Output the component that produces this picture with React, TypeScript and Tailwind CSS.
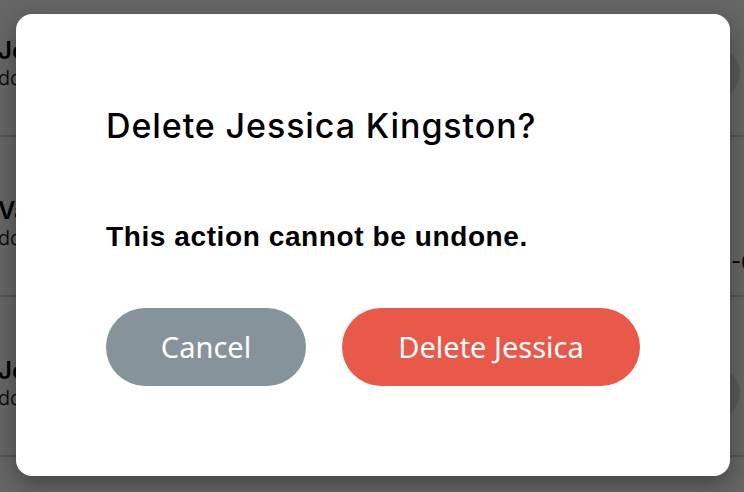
import React from 'react';

interface Person {
  id: number;
  name: string;
  detail: string;
  side: 'avatar' | 'date';
}

const people: Person[] = [
  { id: 1, name: 'Jessica Kingston', detail: 'dob 1988-04-12', side: 'avatar' },
  { id: 2, name: 'Valerie Ortiz', detail: 'dob 1991-09-30', side: 'date' },
  { id: 3, name: 'John Marsh', detail: 'dob 1979-01-07', side: 'avatar' },
  { id: 4, name: 'Karen Doyle', detail: 'dob 1985-06-21', side: 'date' },
];

const DeleteDialog: React.FC = () => {
  return (
    <div className="relative w-[744px] h-[492px] overflow-hidden bg-white">
      {/* list behind the dialog */}
      <ul className="-mt-[23px] -ml-[2px]">
        {people.map(person => (
          <li key={person.id} className="h-[160px] border-b-2 border-[#d4d4d4] flex justify-between">
            <div className="pt-[60px] font-['Inter',sans-serif] text-black whitespace-nowrap">
              <div className="text-[24px] leading-[28px] font-semibold">{person.name}</div>
              <div className="text-[20px] leading-[24px] font-light mt-[1px]">{person.detail}</div>
            </div>
            {person.side === 'avatar' ? (
              <div className="mt-[70px] mr-[4px] w-[52px] h-[52px] rounded-full bg-[#e0e0e0]" />
            ) : (
              <div className="w-[13px] mt-[112px] text-[22px] leading-[26px] whitespace-nowrap font-['Inter',sans-serif] text-black">
                -04-12
              </div>
            )}
          </li>
        ))}
      </ul>

      <div className="absolute inset-0 bg-black/60">
        <div className="mt-[14px] ml-[16px] w-[714px] h-[462px] rounded-[16px] bg-white shadow-[0_8px_24px_rgba(0,0,0,0.35)] pl-[90px] pt-[88px]">
          <h2 className="font-['Inter',sans-serif] font-medium text-[34px] leading-[48px] text-black tracking-[0.9px]">
            Delete Jessica Kingston?
          </h2>
          <p className="mt-[70px] font-['Liberation_Sans',Arial,sans-serif] font-bold text-[28px] leading-[34px] text-black tracking-[0.6px]">
            This action cannot be undone.
          </p>
          <div className="mt-[54px] flex gap-[36px]">
            <button className="w-[200px] h-[78px] rounded-full bg-[#87939a] text-white font-['Noto_Sans',sans-serif] text-[29px]">
              Cancel
            </button>
            <button className="w-[298px] h-[78px] rounded-full bg-[#e8594a] text-white font-['Noto_Sans',sans-serif] text-[29px]">
              Delete Jessica
            </button>
          </div>
        </div>
      </div>
    </div>
  );
};

export default DeleteDialog;
